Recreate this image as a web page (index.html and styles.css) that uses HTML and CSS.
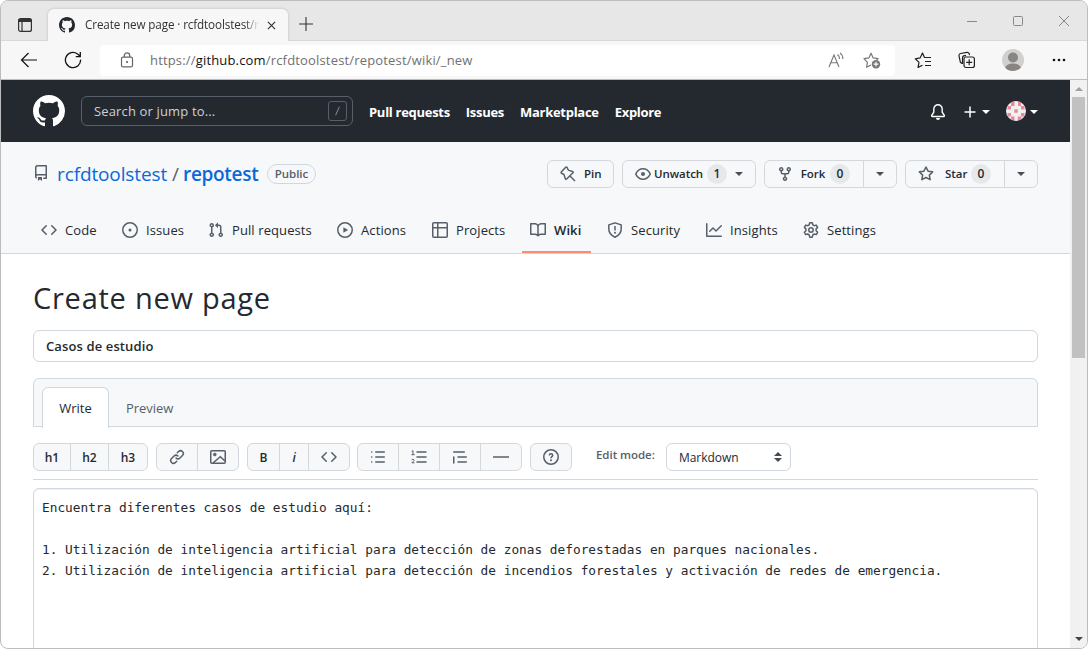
FILE: index.html
```html
<!DOCTYPE html>
<html lang="en">
<head>
<meta charset="utf-8">
<title>Create new page · rcfdtoolstest/repotest</title>
<link rel="stylesheet" href="styles.css">
</head>
<body>
<svg class="sprite" aria-hidden="true">
  <symbol id="mark" viewBox="0 0 16 16"><path fill="currentColor" d="M8 0C3.58 0 0 3.58 0 8c0 3.54 2.29 6.53 5.47 7.59.4.07.55-.17.55-.38 0-.19-.01-.82-.01-1.49-2.01.37-2.53-.49-2.69-.94-.09-.23-.48-.94-.82-1.13-.28-.15-.68-.52-.01-.53.63-.01 1.08.58 1.23.82.72 1.21 1.87.87 2.33.66.07-.52.28-.87.51-1.07-1.78-.2-3.64-.89-3.64-3.95 0-.87.31-1.59.82-2.15-.08-.2-.36-1.02.08-2.12 0 0 .67-.21 2.2.82.64-.18 1.32-.27 2-.27.68 0 1.36.09 2 .27 1.53-1.04 2.2-.82 2.2-.82.44 1.1.16 1.92.08 2.12.51.56.82 1.27.82 2.15 0 3.07-1.87 3.75-3.65 3.95.29.25.54.73.54 1.48 0 1.07-.01 1.93-.01 2.2 0 .21.15.46.55.38A8.013 8.013 0 0016 8c0-4.42-3.58-8-8-8z"/></symbol>
  <symbol id="code" viewBox="0 0 16 16"><path fill="currentColor" d="M4.72 3.22a.75.75 0 011.06 1.06L2.06 8l3.72 3.72a.75.75 0 11-1.06 1.06L.47 8.53a.75.75 0 010-1.06l4.25-4.25zm6.56 0a.75.75 0 10-1.06 1.06L13.94 8l-3.72 3.72a.75.75 0 101.06 1.06l4.25-4.25a.75.75 0 000-1.06l-4.25-4.25z"/></symbol>
  <symbol id="caret" viewBox="0 0 8 4"><path fill="currentColor" d="M0 0h8L4 4z"/></symbol>
</svg>
<div class="window">
  <div class="titlebar">
    <svg class="panes" viewBox="0 0 16 16" fill="none" stroke="#333" stroke-width="1.2"><rect x="1.6" y="1.6" width="12.8" height="12.8" rx="2"/><path d="M1.500 3.4h13" stroke-width="3"/><path d="M5 4v10"/></svg>
    <div class="tab">
      <svg class="tab-logo"><use href="#mark"/></svg>
      <span class="tab-title">Create new page · rcfdtoolstest/r</span>
      <svg class="tab-close" viewBox="0 0 10 10" stroke="#333" stroke-width="1.3"><path d="M1 1l8 8M9 1l-8 8"/></svg>
    </div>
    <svg class="new-tab" viewBox="0 0 14 14" stroke="#333" stroke-width="1.1"><path d="M7 0v14M0 7h14"/></svg>
    <div class="controls">
      <svg viewBox="0 0 12 12" stroke="#888"><path d="M1 6.5h10"/></svg>
      <svg viewBox="0 0 12 12" fill="none" stroke="#888"><rect x="1.5" y="1.5" width="9" height="9" rx="1"/></svg>
      <svg viewBox="0 0 12 12" stroke="#888"><path d="M1 1l10 10M11 1L1 11"/></svg>
    </div>
  </div>
  <div class="toolbar">
    <svg class="back" viewBox="0 0 18 16" fill="none" stroke="#111" stroke-width="1.2"><path d="M17 8H1.5M8.500 1l-7 7 7 7"/></svg>
    <svg class="reload" viewBox="0 0 18 18" fill="none" stroke="#111" stroke-width="1.3"><path d="M16.600 8.600A7.600 7.600 0 1 1 13.500 2.900L16 5M16.300 1v4.600h-4.500"/></svg>
    <div class="address">
      <svg class="lock" viewBox="0 0 14 16" fill="none" stroke="#666" stroke-width="1.2"><rect x="1.5" y="5.2" width="11" height="9.7" rx="1.5"/><path d="M4.3 5V3.6a2.7 2.7 0 0 1 5.4 0V5"/><circle cx="7" cy="10" r=".5" fill="#666"/></svg>
      <span class="url">https://<b>github.com</b>/rcfdtoolstest/repotest/wiki/_new</span>
      <svg class="read" viewBox="0 0 17 16" fill="none" stroke="#777" stroke-width="1.1"><path d="M1 15L6 3l5 12M2.8 10.8h6.4M9.5 2.5q2.2 1.5 2 4.5M12 .9q3 2.3 2.8 6.1"/></svg>
      <svg class="fav" viewBox="0 0 18 18" fill="none" stroke="#777" stroke-width="1.2"><path d="M8 14l-4.4 2.3.8-5L1 7.6l4.9-.7L8 2.2l2.2 4.7 4.9.7-1.7 1.7" stroke-linejoin="round"/><circle cx="13" cy="13.2" r="4.2" fill="#777" stroke="none"/><path stroke="#fff" d="M13 10.8v4.8M10.6 13.2h4.8"/></svg>
    </div>
    <svg class="favlist" viewBox="0 0 18 18" fill="none" stroke="#222" stroke-width="1.2"><path d="M8.500 14.2l-4.500 2.200 1-5L1.3 7.8l4.8-.9L8.5 2l2 4.500h6.500M11 10.500h6M11 14.500h6" stroke-linejoin="round"/></svg>
    <svg class="collections" viewBox="0 0 18 18" fill="none" stroke="#222" stroke-width="1.2"><path d="M4 12.5L2.4 11.3 1 4.8Q.8 3 2.5 2.5L9 1.3q1.6-.2 2.2 1.4l.4 1.500"/><rect x="6" y="6" width="10.4" height="10.5" rx="2"/><path d="M11.2 8.3v6M8.2 11.3h6M4.500 13V7q0-2.300 2.300-2.300H8"/></svg>
    <svg class="profile" viewBox="0 0 22 22"><defs><clipPath id="round"><circle cx="11" cy="11" r="11"/></clipPath></defs><g clip-path="url(#round)"><path fill="#d2d0ce" d="M0 0h22v22H0z"/><circle cx="11" cy="8.5" r="5" fill="#8a8583"/><ellipse cx="11" cy="19.500" rx="8" ry="5" fill="#8a8583"/></g></svg>
    <svg class="more" viewBox="0 0 14 4" fill="#111"><circle cx="2" cy="2" r="1.3"/><circle cx="7" cy="2" r="1.3"/><circle cx="12" cy="2" r="1.3"/></svg>
  </div>
  <div class="viewport">
    <main class="page">
      <header class="gh-header">
        <svg class="gh-logo"><use href="#mark"/></svg>
        <div class="search"><span>Search or jump to...</span><kbd><svg viewBox="0 0 18 20" fill="none" stroke="#8b949e"><path d="M11 5L7 14"/></svg></kbd></div>
        <nav class="gh-nav"><a>Pull requests</a><a>Issues</a><a>Marketplace</a><a>Explore</a></nav>
        <div class="gh-user">
          <svg class="bell" viewBox="0 0 16 16" fill="none" stroke="currentColor" stroke-width="1.400"><path d="M8 .8a4.200 4.200 0 0 0-4.200 4.200v3.200L1.700 11.400q-.4 1 .7 1.100h11.200q1.100-.1.700-1.100L12.200 8.200V5A4.200 4.200 0 0 0 8 .8z"/><path fill="currentColor" stroke="none" d="M6 14h4a2 2 0 0 1-4 0z"/></svg>
          <svg class="plus" viewBox="0 0 12 12" stroke="currentColor" stroke-width="1.5"><path d="M6 .5v11M.5 6h11"/></svg>
          <svg class="caret"><use href="#caret"/></svg>
          <svg class="avatar" viewBox="0 0 20 20"><defs><clipPath id="disc"><circle cx="10" cy="10" r="10"/></clipPath></defs><g clip-path="url(#disc)"><path fill="#f0f0f0" d="M0 0h20v20H0z"/><path fill="#e8899b" d="M5 1h3.500v4H5zM12 1h3v4h-3zM1.500 5H5v3.500H1.500zM15 5h3.500v3.500H15zM8.300 8.300h3.500v3.500H8.300zM1.500 12H5v3.500H1.500zM15 12h3.500v3.500H15zM5 15.500h3.500V19H5zM11.800 15.500h3.500V19h-3.500z"/></g></svg>
          <svg class="caret"><use href="#caret"/></svg>
        </div>
      </header>
      <section class="repo-head">
        <div class="repo-row">
          <svg class="repo-icon" viewBox="0 0 16 16" fill="currentColor"><path fill-rule="evenodd" d="M2 2.500A2.500 2.500 0 014.500 0h8.750a.75.75 0 01.75.75v12.500a.75.75 0 01-.75.75h-2.500a.75.75 0 110-1.500h1.750v-2h-8a1 1 0 00-.714 1.700.75.75 0 01-1.072 1.050A2.495 2.495 0 012 11.500v-9zm10.500-1V9h-8c-.356 0-.694.074-1 .208V2.500a1 1 0 011-1h8zM5 12.250v3.250a.25.25 0 00.4.2l1.450-1.087a.25.25 0 01.3 0L8.600 15.700a.25.25 0 00.4-.2v-3.250a.25.25 0 00-.25-.25h-3.500a.25.25 0 00-.25.25z"/></svg>
          <a class="owner">rcfdtoolstest</a><span class="slash">/</span><a class="repo">repotest</a>
          <span class="public">Public</span>
          <div class="actions">
            <button class="btn pin"><svg class="ic" viewBox="0 0 16 16" fill="none" stroke="currentColor" stroke-width="1.500" stroke-linejoin="round"><path d="M10.200 10.200L15 15M1.300 6.100L5.700 1.300q.8-.7 1.400.2l1 2.200q.3.500.9.700l3.600 1.100q1 .5.300 1.300L6.700 13q-.9.700-1.400-.3L4.200 9.100q-.2-.6-.7-.9L1.500 7.300q-.8-.5-.2-1.200z"/></svg><span>Pin</span></button>
            <button class="btn watch"><svg class="ic" viewBox="0 0 16 16" fill="none" stroke="currentColor" stroke-width="1.500"><path d="M8 2.750C4.500 2.750 2 5.500.9 7.600q-.2.400 0 .8C2 10.500 4.500 13.250 8 13.250s6-2.750 7.100-4.850q.2-.4 0-.8C14 5.500 11.500 2.750 8 2.750z"/><circle cx="8" cy="8" r="2" fill="currentColor" stroke="none"/></svg><span>Unwatch</span><i class="count">1</i><svg class="caret"><use href="#caret"/></svg></button>
            <div class="split fork"><button class="btn"><svg class="ic" viewBox="0 0 16 16" fill="currentColor"><path fill-rule="evenodd" d="M5 3.250a.75.75 0 11-1.500 0 .75.75 0 011.500 0zm0 2.122a2.250 2.250 0 10-1.500 0v.878A2.250 2.250 0 005.750 8.500h1.500v2.128a2.251 2.251 0 101.500 0V8.500h1.500a2.250 2.250 0 002.250-2.250v-.878a2.250 2.250 0 10-1.500 0v.878a.75.75 0 01-.75.75h-4.500A.75.75 0 015 6.250v-.878zm3.750 7.378a.75.75 0 11-1.500 0 .75.75 0 011.500 0zm3-8.750a.75.75 0 100-1.500.75.75 0 000 1.500z"/></svg><span>Fork</span><i class="count">0</i></button><button class="btn drop"><svg class="caret"><use href="#caret"/></svg></button></div>
            <div class="split star"><button class="btn"><svg class="ic" viewBox="0 0 16 16" fill="none" stroke="currentColor" stroke-width="1.500" stroke-linejoin="round"><path d="M8 1l2.100 4.200 4.550.65-3.300 3.250.8 4.600L8 11.500l-4.150 2.200.8-4.600-3.300-3.250 4.550-.65z"/></svg><span>Star</span><i class="count">0</i></button><button class="btn drop"><svg class="caret"><use href="#caret"/></svg></button></div>
          </div>
        </div>
        <nav class="tabs">
          <a><svg class="ic"><use href="#code"/></svg>Code</a>
          <a><svg class="ic" viewBox="0 0 16 16" fill="none" stroke="currentColor" stroke-width="1.500"><circle cx="8" cy="8" r="7.250"/><circle cx="8" cy="8" r="1.500" fill="currentColor" stroke="none"/></svg>Issues</a>
          <a><svg class="ic" viewBox="0 0 16 16" fill="currentColor"><path fill-rule="evenodd" d="M7.177 3.073L9.573.677A.25.25 0 0110 .854v4.792a.25.25 0 01-.427.177L7.177 3.427a.25.25 0 010-.354zM3.750 2.500a.75.75 0 100 1.500.75.75 0 000-1.500zm-2.250.75a2.250 2.250 0 113 2.122v5.256a2.251 2.251 0 11-1.500 0V5.372A2.250 2.250 0 011.500 3.250zM11 2.500h-1V4h1a1 1 0 011 1v5.628a2.251 2.251 0 101.500 0V5A2.500 2.500 0 0011 2.500zm1 10.250a.75.75 0 111.500 0 .75.75 0 01-1.500 0zM3.750 12a.75.75 0 100 1.500.75.75 0 000-1.500z"/></svg>Pull requests</a>
          <a><svg class="ic" viewBox="0 0 16 16" fill="none" stroke="currentColor" stroke-width="1.500"><circle cx="8" cy="8" r="7.250"/><path d="M6.400 5.200v5.600L11.200 8z" fill="currentColor" stroke="none"/></svg>Actions</a>
          <a><svg class="ic" viewBox="0 0 16 16" fill="none" stroke="currentColor" stroke-width="1.500"><rect x=".75" y=".75" width="14.500" height="14.500" rx="1"/><path d="M5.750 1v14M1 5.750h14"/></svg>Projects</a>
          <a class="current"><svg class="ic" viewBox="0 0 16 16" fill="currentColor"><path fill-rule="evenodd" d="M0 1.750A.75.75 0 01.75 1h4.253c1.227 0 2.317.59 3 1.501A3.744 3.744 0 0111.006 1h4.245a.75.75 0 01.75.75v10.500a.75.75 0 01-.75.75h-4.507a2.250 2.250 0 00-1.591.659l-.622.621a.75.75 0 01-1.060 0l-.622-.621A2.250 2.250 0 005.258 13H.75a.75.75 0 01-.75-.75V1.750zm8.755 3a2.250 2.250 0 012.250-2.250H14.500v9h-3.757c-.71 0-1.400.201-1.992.572l.004-7.322zm-1.504 7.324l.004-5.073-.002-2.253A2.250 2.250 0 005.003 2.500H1.500v9h3.757a3.750 3.750 0 011.994.574z"/></svg>Wiki</a>
          <a><svg class="ic" viewBox="0 0 16 16" fill="none" stroke="currentColor" stroke-width="1.500"><path d="M8 .9L14.200 2.900V7c0 4-2.400 6.500-6.200 8.200C4.200 13.500 1.800 11 1.800 7V2.900z" stroke-linejoin="round"/><path d="M8 4v4.500"/><circle cx="8" cy="10.700" r="1" fill="currentColor" stroke="none"/></svg>Security</a>
          <a><svg class="ic" viewBox="0 0 16 16" fill="currentColor"><path fill-rule="evenodd" d="M1.500 1.750a.75.75 0 00-1.500 0v12.500c0 .414.336.75.75.75h14.500a.75.75 0 000-1.500H1.500V1.750zm14.280 2.530a.75.75 0 00-1.060-1.060L10 7.940 7.530 5.470a.75.75 0 00-1.060 0L3.220 8.720a.75.75 0 001.060 1.060L7 7.060l2.470 2.470a.75.75 0 001.060 0l5.250-5.250z"/></svg>Insights</a>
          <a><svg class="ic" viewBox="0 0 16 16" fill="none" stroke="currentColor" stroke-width="1.500" stroke-linejoin="round"><path d="M6.700.8h2.600l.5 2 1.500.9 2-.6 1.300 2.300-1.500 1.500v1.900l1.500 1.500-1.300 2.300-2-.6-1.500.9-.5 2.300H6.700l-.5-2.300-1.500-.9-2 .6-1.300-2.300 1.500-1.500V6.900L1.400 5.400l1.300-2.300 2 .6 1.500-.9z"/><circle cx="8" cy="8" r="2.200"/></svg>Settings</a>
        </nav>
      </section>
      <section class="editor">
        <h1>Create new page</h1>
        <div class="title-input">Casos de estudio</div>
        <div class="mode-tabs"><a class="write">Write</a><a class="preview">Preview</a></div>
        <div class="format">
          <div class="group headings"><b>h1</b><b>h2</b><b>h3</b></div>
          <div class="group wide"><b><svg class="ic" viewBox="0 0 16 16" fill="currentColor"><path d="M7.775 3.275a.75.75 0 001.060 1.060l1.250-1.250a2 2 0 112.830 2.830l-2.500 2.500a2 2 0 01-2.830 0 .75.75 0 00-1.060 1.060 3.500 3.500 0 004.950 0l2.500-2.500a3.500 3.500 0 00-4.950-4.950l-1.250 1.250zm-4.690 9.640a2 2 0 010-2.830l2.500-2.500a2 2 0 012.830 0 .75.75 0 001.060-1.060 3.500 3.500 0 00-4.950 0l-2.500 2.500a3.500 3.500 0 004.950 4.950l1.250-1.250a.75.75 0 00-1.060-1.060l-1.250 1.250a2 2 0 01-2.830 0z"/></svg></b><b><svg class="ic" viewBox="0 0 16 16" fill="none" stroke="currentColor" stroke-width="1.500"><rect x=".75" y="1.750" width="14.500" height="12.500" rx="1"/><circle cx="4.800" cy="5.500" r="1.500" fill="currentColor" stroke-width=".5"/><path d="M3 14l7.300-6.200L15 12"/></svg></b></div>
          <div class="group styles"><b>B</b><b><em>i</em></b><b><svg class="ic"><use href="#code"/></svg></b></div>
          <div class="group lists"><b><svg class="ic" viewBox="0 0 16 16" fill="none" stroke="currentColor" stroke-width="1.500" stroke-linecap="round"><path d="M5.750 3h8.500M5.750 8h8.500M5.750 13h8.500M1.700 3h.1M1.700 8h.1M1.700 13h.1"/></svg></b><b><svg class="ic" viewBox="0 0 16 16" fill="none" stroke="currentColor" stroke-width="1.500" stroke-linecap="round"><path d="M6 3h9M6 8h9M6 13h9"/><path stroke-width="1" d="M1 2.300l1-.6v4M.9 5.700h2.300M.9 10.700q1-1 1.900-.1.600 1-.5 1.700l-1.400 1.500h2.200"/></svg></b><b><svg class="ic" viewBox="0 0 16 16" fill="none" stroke="currentColor" stroke-width="1.500" stroke-linecap="round"><path d="M1.750 3h10.500M6 8h8.250M6 13h8.250M1.750 8v6"/></svg></b><b><svg class="ic" viewBox="0 0 16 16" stroke="currentColor" stroke-width="1.500"><path d="M0 8h16"/></svg></b></div>
          <div class="group wide"><b><svg class="ic" viewBox="0 0 16 16" fill="none" stroke="currentColor" stroke-width="1.500"><circle cx="8" cy="8" r="7.250"/><path d="M6.200 6.300C6.500 4.300 9.700 4.400 9.700 6.300 9.700 7.600 8 7.600 8 9.300"/><circle cx="8" cy="11.200" r="1" fill="currentColor" stroke="none"/></svg></b></div>
          <span class="edit-mode">Edit mode:</span>
          <div class="select"><span>Markdown</span><svg viewBox="0 0 8 10" fill="#424a53"><path d="M0 4h8L4 0zM0 6h8l-4 4z"/></svg></div>
        </div>
        <div class="textarea">Encuentra diferentes casos de estudio aquí:

1. Utilización de inteligencia artificial para detección de zonas deforestadas en parques nacionales.
2. Utilización de inteligencia artificial para detección de incendios forestales y activación de redes de emergencia.</div>
      </section>
    </main>
    <div class="scrollbar">
      <svg viewBox="0 0 8 4" fill="#a0a0a0"><path d="M0 4h8L4 0z"/></svg>
      <div class="thumb"></div>
      <svg class="down" viewBox="0 0 8 4" fill="#444"><path d="M0 0h8L4 4z"/></svg>
    </div>
  </div>
</div>
</body>
</html>
```
FILE: styles.css
```css
* { box-sizing: border-box; }
body { margin: 0; background: #fff; font-family: "Open Sans", "Noto Sans", sans-serif; font-size: 13px; letter-spacing: -.05px; color: #24292f; white-space: nowrap; }
svg { display: block; flex: none; }
.sprite { display: none; }
button { font: inherit; letter-spacing: inherit; }
.window { width: 1088px; height: 649px; border: 1px solid #bcbcbc; border-radius: 8px; overflow: hidden; display: flex; flex-direction: column; }
.titlebar { height: 40px; flex: none; background: #e7e7e7; border-bottom: 1px solid #d8d8d8; display: flex; align-items: flex-start; padding-left: 16px; }
.panes { width: 16px; height: 16px; margin-top: 16px; }
.tab { width: 240px; height: 32px; margin: 8px 0 0 15px; background: #f7f7f7; border-radius: 6px 6px 0 0; box-shadow: 0 0 3px #bbb; clip-path: inset(-4px -4px 0 -4px); display: flex; align-items: center; padding-left: 11px; }
.tab-logo { width: 16px; height: 16px; color: #24292f; }
.tab-title { width: 174px; margin: -2px 0 0 10px; overflow: hidden; font-size: 11.700px; color: #333; letter-spacing: -.13px; -webkit-mask-image: linear-gradient(90deg, #000 92%, transparent); mask-image: linear-gradient(90deg, #000 92%, transparent); }
.tab-close { width: 9px; height: 9px; margin-left: 8px; }
.new-tab { width: 14px; height: 14px; margin: 16px 0 0 11px; }
.controls { display: flex; gap: 34px; margin: 14px 17px 0 auto; }
.controls svg { width: 12px; height: 12px; }
.toolbar { height: 39px; flex: none; background: #f7f7f7; border-bottom: 1px solid #bdbdbd; display: flex; align-items: center; padding-left: 19px; }
.back { width: 18px; height: 16px; }
.reload { width: 18px; height: 18px; margin-left: 26px; }
.address { width: 795px; height: 31px; margin-left: 18px; background: #fff; border-radius: 4px; display: flex; align-items: center; padding-left: 20px; }
.lock { width: 14px; height: 16px; }
.url { margin-left: 16px; color: #707070; font-size: 13px; letter-spacing: .17px; }
.url b { color: #111; font-weight: 400; }
.read { width: 17px; height: 16px; margin-left: auto; }
.fav { width: 18px; height: 18px; margin: 0 14px 0 18px; }
.favlist { width: 18px; height: 18px; margin-left: 19px; }
.collections { width: 18px; height: 18px; margin-left: 26px; }
.profile { width: 22px; height: 22px; margin-left: 26px; }
.more { width: 14px; height: 4px; margin-left: 28px; }
.viewport { flex: 1; min-height: 0; display: flex; }
.page { width: 1069px; overflow: hidden; }
.scrollbar { width: 17px; background: #f1f1f1; display: flex; flex-direction: column; align-items: center; padding: 7px 0 7px 0; }
.scrollbar svg { width: 8px; height: 4px; }
.thumb { width: 13px; height: 261px; margin-top: 6px; background: #c1c1c1; }
.scrollbar .down { margin-top: auto; }
.gh-header { height: 62px; background: #24292f; display: flex; align-items: center; padding: 0 32px; color: #fff; }
.gh-logo { width: 32px; height: 32px; }
.search { width: 272px; height: 30px; margin-left: 16px; border: 1px solid #57606a; border-radius: 6px; display: flex; align-items: center; justify-content: space-between; padding: 0 5px 0 12px; color: #cdd1d4; letter-spacing: .15px; }
.search kbd { width: 19px; height: 20px; border: 1px solid #57606a; border-radius: 3px; }
.gh-nav { display: flex; gap: 16px; margin: 2px 0 0 16px; font-weight: 700; letter-spacing: -.29px; }
.gh-user { display: flex; align-items: center; margin: 2px 0 0 auto; }
.bell { width: 16px; height: 16px; }
.plus { width: 12px; height: 12px; margin-left: 18px; }
.caret { width: 8px; height: 4px; }
.gh-user .caret { margin-left: 6px; }
.avatar { width: 20px; height: 20px; margin: -2px 0 0 16px; }
.gh-user .avatar + .caret { margin: -1px 0 0 4px; }
.repo-head { height: 112px; background: #f6f8fa; border-bottom: 1px solid #d0d7de; display: flex; flex-direction: column; }
.repo-row { height: 64px; display: flex; align-items: center; padding: 0 32px; }
.repo-icon { width: 16px; height: 16px; margin-top: -2px; color: #57606a; }
.owner, .repo { color: #0969da; font-size: 19px; letter-spacing: -.3px; }
.owner { width: 111px; margin-left: 8px; letter-spacing: -.12px; }
.slash { width: 15px; font-size: 19px; color: #57606a; text-align: center; }
.repo { width: 76px; font-weight: 600; }
.public { width: 49px; height: 20px; margin-left: 8px; border: 1px solid #d0d7de; border-radius: 10px; font-size: 11.500px; font-weight: 600; color: #57606a; line-height: 18px; text-align: center; }
.actions { display: flex; gap: 8px; margin-left: auto; }
.btn { height: 28px; border: 1px solid #d4d8dc; border-radius: 6px; background: #f6f8fa; color: #24292f; font-size: 11.500px; font-weight: 600; padding: 0 0 0 12px; display: flex; align-items: center; }
.btn .ic { color: #57606a; }
.btn .caret { color: #484f58; margin-top: 1px; }
.ic { width: 16px; height: 16px; color: #57606a; }
.pin { width: 67px; }
.pin span { margin-left: 8px; }
.watch { width: 134px; }
.watch span { margin-left: 3px; width: 49px; }
.count { height: 20px; min-width: 20px; margin-left: 4px; border-radius: 10px; background: #e6e8ea; font-style: normal; font-size: 12px; line-height: 20px; text-align: center; }
.watch .caret { margin-left: 8px; }
.split { display: flex; }
.split .btn:first-child { border-radius: 6px 0 0 6px; width: 100px; }
.split .drop { width: 34px; margin-left: -1px; border-radius: 0 6px 6px 0; padding-left: 12px; }
.split span { margin-left: 7px; width: 26px; }
.star span { margin-left: 11px; width: 22px; }
.tabs { height: 48px; display: grid; grid-template-columns: 81px 86px 129px 95px 99px 76px 99px 97px 92px; padding-left: 32px; letter-spacing: .1px; }
.tabs a { display: flex; align-items: center; gap: 8px; padding: 2px 0 0 8px; height: 48px; }
.tabs .current { font-weight: 600; width: 69px; margin-left: -1px; border-bottom: 2px solid #fd8c73; padding-top: 4px; }
.editor { padding: 0 32px; }
h1 { margin: 22px 0 0; font-size: 29px; font-weight: 400; line-height: 43px; letter-spacing: .75px; }
.title-input { height: 32px; margin-top: 11px; border: 1px solid #d0d7de; border-radius: 6px; padding-left: 12px; line-height: 30px; font-weight: 600; letter-spacing: .12px; }
.mode-tabs { height: 49px; margin-top: 16px; background: #f6f8fa; border: 1px solid #d0d7de; border-radius: 6px 6px 0 0; display: flex; padding: 8px 0 0 8px; }
.write { width: 67px; height: 41px; margin-bottom: -1px; border: 1px solid #d0d7de; border-bottom: 0; border-radius: 6px 6px 0 0; background: #fff; line-height: 40px; text-align: center; }
.preview { margin-left: 17px; line-height: 42px; color: #57606a; }
.format { height: 53px; border-bottom: 1px solid #d0d7de; display: flex; gap: 8px; padding-top: 16px; }
.group { height: 28px; border: 1px solid #d4d8dc; border-radius: 6px; background: #f6f8fa; display: flex; font-size: 12px; }
.group b { width: 41px; font-weight: 600; display: flex; align-items: center; justify-content: center; }
.group b + b { border-left: 1px solid #d4d8dc; }
.headings b { width: 39px; }
.headings b:first-child { width: 36px; }
.headings b:nth-child(2) { width: 38px; }
.styles b { width: 31px; }
.styles b + b { width: 29px; }
.styles b:last-child { width: 41px; }
.wide b:first-child, .lists b:first-child { width: 40px; }
.group.styles { margin-right: -1px; }
.edit-mode { width: 62px; margin: 4px 0 0 16px; font-size: 11.500px; font-weight: 600; color: #57606a; }
.select { width: 125px; height: 28px; border: 1px solid #d0d7de; border-radius: 6px; display: flex; align-items: center; justify-content: space-between; padding: 0 8px 0 12px; font-size: 12px; }
.select svg { width: 8px; height: 10px; }
.textarea { height: 400px; margin-top: 8px; border: 1px solid #d0d7de; border-radius: 6px; box-shadow: inset 0 1px 0 #eef1f4; padding: 8px; font: 12.790px/21px "DejaVu Sans Mono", monospace; letter-spacing: 0; white-space: pre; }
```
